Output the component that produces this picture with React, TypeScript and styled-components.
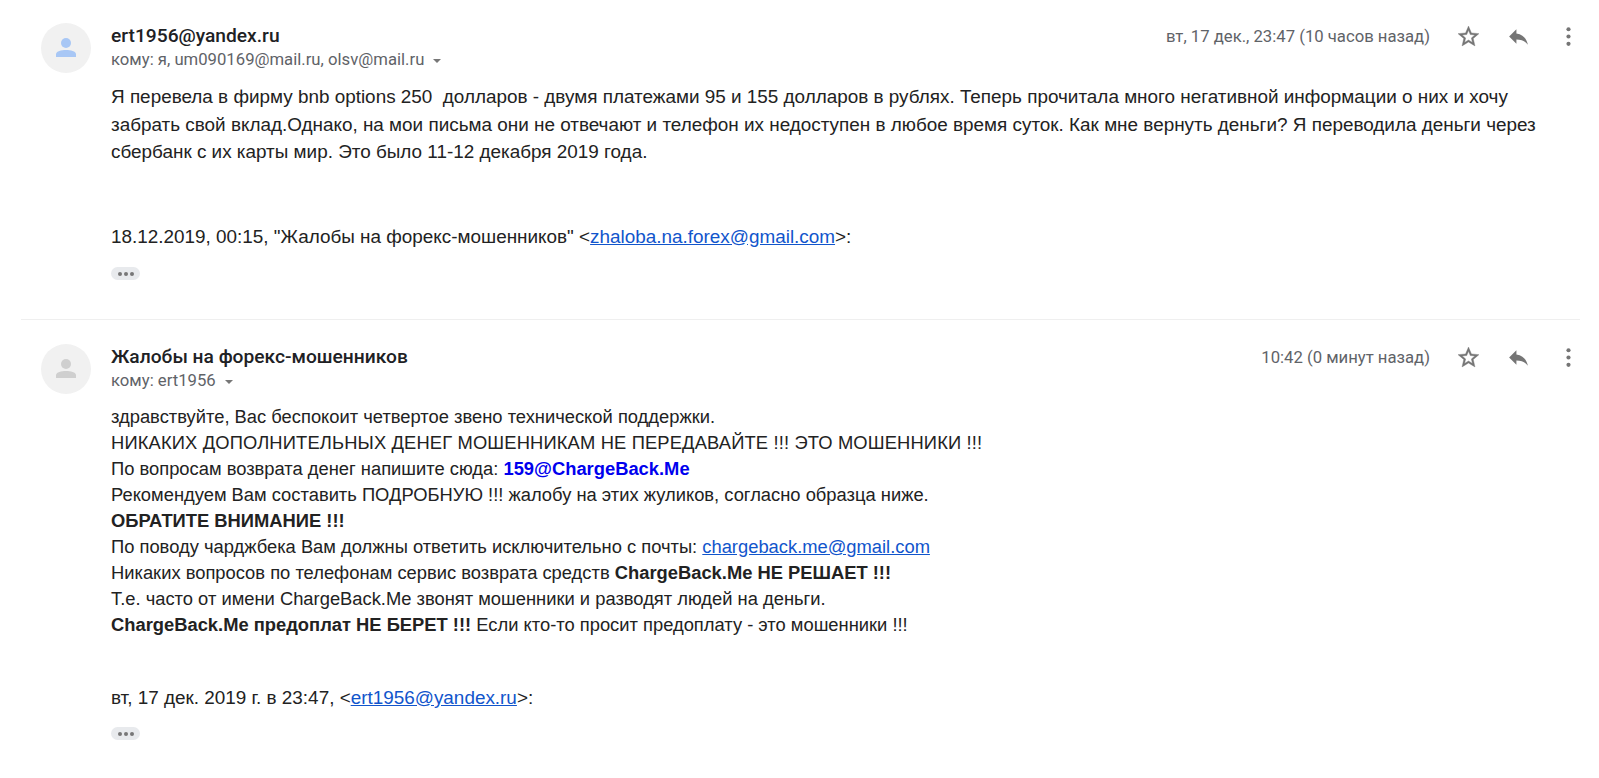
import * as React from "react";
import styled, { createGlobalStyle } from "styled-components";

const GlobalStyle = createGlobalStyle`
  html, body {
    margin: 0;
    padding: 0;
    background: #fff;
  }
`;

const SPage = styled.div`
  width: 1599px;
  height: 778px;
  overflow: hidden;
  background: #fff;
  font-family: "Liberation Sans", Arial, sans-serif;
  color: #222;
`;

const SMessage = styled.div<{ $first?: boolean }>`
  display: flex;
  margin-left: 21px;
  margin-right: 19px;
  padding-left: 20px;
  padding-top: ${(p) => (p.$first ? "23px" : "24px")};
  height: ${(p) => (p.$first ? "320px" : "auto")};
  box-sizing: border-box;
  border-bottom: ${(p) => (p.$first ? "1px solid #efefef" : "none")};
`;

const SAvatar = styled.div`
  flex: none;
  width: 50px;
  height: 50px;
  border-radius: 50%;
  background: #f1f1f1;
  display: flex;
  align-items: center;
  justify-content: center;
  margin-right: 20px;
`;

const SContent = styled.div`
  flex: 1;
  min-width: 0;
`;

const SHead = styled.div`
  display: flex;
  justify-content: space-between;
  align-items: flex-start;
  margin-top: 1px;
  margin-right: -1px;
  font-family: Roboto, sans-serif;
`;

const SFrom = styled.div`
  font-size: 19.2px;
  font-weight: 500;
  line-height: 24px;
  color: #202124;
`;

const STo = styled.div`
  display: flex;
  align-items: center;
  font-size: 16.7px;
  line-height: 24px;
  color: #5f6368;
`;

const SCaret = styled.span`
  width: 0;
  height: 0;
  margin-left: 9px;
  margin-top: 2px;
  border-left: 4.5px solid transparent;
  border-right: 4.5px solid transparent;
  border-top: 4.5px solid #777;
`;

const SActions = styled.div`
  display: flex;
  align-items: center;
  height: 24px;
`;

const SDate = styled.div`
  font-size: 16.7px;
  color: #5f6368;
  margin-right: 26px;
`;

const SIconButton = styled.span`
  display: flex;
  align-items: center;
  justify-content: center;
  width: 25px;
  height: 24px;
  margin-right: 25px;
  &:last-child {
    margin-right: 0;
  }
`;

const SBody = styled.div<{ $tight?: boolean }>`
  font-size: 18.9px;
  line-height: ${(p) => (p.$tight ? "26px" : "27.5px")};
  color: #222;
  margin-top: 11px;
`;

// the pasted support text comes in a slightly smaller size than the quote line
const SPasted = styled.div`
  font-size: 18.35px;
`;

const SCaps = styled.span`
  letter-spacing: 0.14px;
`;

const SGap = styled.div<{ $h: number }>`
  height: ${(p) => p.$h}px;
`;

const SLink = styled.a`
  color: #1155cc;
  text-decoration: underline;
`;

const SBlueBold = styled.b`
  color: #0000ee;
`;

const STrim = styled.div`
  display: flex;
  align-items: center;
  justify-content: center;
  gap: 2px;
  width: 29px;
  height: 13px;
  border-radius: 7px;
  background: #e8eaed;
`;

const SDot = styled.span`
  width: 4px;
  height: 4px;
  border-radius: 50%;
  background: #777;
`;

const PersonIcon = ({ color }: { color: string }) => (
  <svg width="26" height="26" viewBox="0 0 26 26" fill={color}>
    <circle cx="13" cy="8" r="5" />
    <path d="M3 22c0-1 0-2.600 0-2.800C3 16.300 8.500 15 13 15s10 1.300 10 4.200c0 .2 0 1.800 0 2.800z" />
  </svg>
);

const StarIcon = () => (
  <svg width="25" height="25" viewBox="0 0 24 24" fill="#757575" stroke="#757575" strokeWidth="0.4">
    <path d="M22 9.240l-7.190-.620L12 2 9.190 8.630 2 9.240l5.460 4.730L5.820 21 12 17.270 18.180 21l-1.630-7.030L22 9.240zM12 15.400l-3.760 2.270 1-4.280-3.320-2.880 4.380-.380L12 6.100l1.710 4.040 4.380.380-3.320 2.880 1 4.280L12 15.400z" />
  </svg>
);

const ReplyIcon = () => (
  <svg width="25" height="25" viewBox="0 0 24 24" fill="#757575">
    <path d="M10 9V5l-7 7 7 7v-4.100c5 0 8.500 1.600 11 5.100-1-5-4-10-11-11z" />
  </svg>
);

const MoreIcon = () => (
  <svg width="25" height="25" viewBox="0 0 24 24" fill="#757575">
    <circle cx="12" cy="5" r="2" />
    <circle cx="12" cy="12" r="2" />
    <circle cx="12" cy="19" r="2" />
  </svg>
);

const Trim = () => (
  <STrim>
    <SDot />
    <SDot />
    <SDot />
  </STrim>
);

const Header = ({ from, to, date }: { from: string; to: string; date: string }) => (
  <SHead>
    <div>
      <SFrom>{from}</SFrom>
      <STo>
        {to}
        <SCaret />
      </STo>
    </div>
    <SActions>
      <SDate>{date}</SDate>
      <SIconButton>
        <StarIcon />
      </SIconButton>
      <SIconButton>
        <ReplyIcon />
      </SIconButton>
      <SIconButton>
        <MoreIcon />
      </SIconButton>
    </SActions>
  </SHead>
);

const App = () => (
  <SPage>
    <GlobalStyle />
    <SMessage $first>
      <SAvatar>
        <PersonIcon color="#a8c7f5" />
      </SAvatar>
      <SContent>
        <Header
          from="ert1956@yandex.ru"
          to="кому: я, um090169@mail.ru, olsv@mail.ru"
          date="вт, 17 дек., 23:47 (10 часов назад)"
        />
        <SBody>
          Я перевела в фирму bnb options 250&nbsp; долларов - двумя платежами 95 и 155 долларов в рублях. Теперь
          прочитала много негативной информации о них и хочу
          <br />
          забрать свой вклад.Однако, на мои письма они не отвечают и телефон их недоступен в любое время суток. Как
          мне вернуть деньги? Я переводила деньги через
          <br />
          сбербанк с их карты мир. Это было 11-12 декабря 2019 года.
          <SGap $h={57} />
          18.12.2019, 00:15, "Жалобы на форекс-мошенников" &lt;
          <SLink href="#">zhaloba.na.forex@gmail.com</SLink>&gt;:
          <SGap $h={17} />
          <Trim />
        </SBody>
      </SContent>
    </SMessage>
    <SMessage>
      <SAvatar>
        <PersonIcon color="#cfcfcf" />
      </SAvatar>
      <SContent>
        <Header from="Жалобы на форекс-мошенников" to="кому: ert1956" date="10:42 (0 минут назад)" />
        <SBody $tight>
          <SPasted>
            здравствуйте, Вас беспокоит четвертое звено технической поддержки.
            <br />
            <SCaps>НИКАКИХ ДОПОЛНИТЕЛЬНЫХ ДЕНЕГ МОШЕННИКАМ НЕ ПЕРЕДАВАЙТЕ !!! ЭТО МОШЕННИКИ !!!</SCaps>
            <br />
            По вопросам возврата денег напишите сюда: <SBlueBold>159@ChargeBack.Me</SBlueBold>
            <br />
            Рекомендуем Вам составить ПОДРОБНУЮ !!! жалобу на этих жуликов, согласно образца ниже.
            <br />
            <b>ОБРАТИТЕ ВНИМАНИЕ !!!</b>
            <br />
            По поводу чарджбека Вам должны ответить исключительно с почты:{" "}
            <SLink href="#">chargeback.me@gmail.com</SLink>
            <br />
            Никаких вопросов по телефонам сервис возврата средств <b>ChargeBack.Me НЕ РЕШАЕТ !!!</b>
            <br />
            Т.е. часто от имени ChargeBack.Me звонят мошенники и разводят людей на деньги.
            <br />
            <b>ChargeBack.Me предоплат НЕ БЕРЕТ !!!</b> Если кто-то просит предоплату - это мошенники !!!
          </SPasted>
          <SGap $h={47} />
          вт, 17 дек. 2019 г. в 23:47, &lt;<SLink href="#">ert1956@yandex.ru</SLink>&gt;:
          <SGap $h={16} />
          <Trim />
        </SBody>
      </SContent>
    </SMessage>
  </SPage>
);

export default App;
